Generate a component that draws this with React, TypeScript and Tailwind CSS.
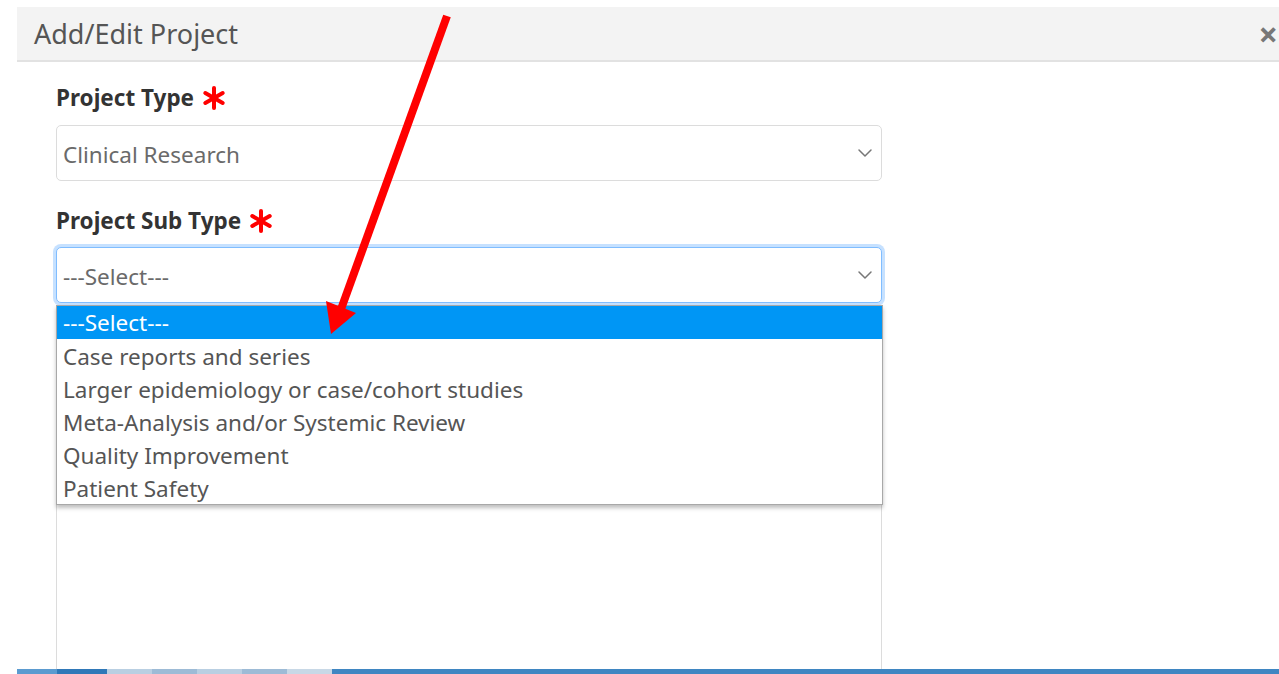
import { ChevronDown } from 'lucide-react'

const SUB_TYPES = [
  '---Select---',
  'Case reports and series',
  'Larger epidemiology or case/cohort studies',
  'Meta-Analysis and/or Systemic Review',
  'Quality Improvement',
  'Patient Safety',
]

/** Heavy red "required" asterisk next to field labels. */
function Required() {
  return (
    <svg viewBox="0 0 24 24" className="ml-[8px] h-[24px] w-[24px]" aria-hidden>
      <g stroke="#f00" strokeWidth="4" strokeLinecap="round">
        <line x1="12" y1="2" x2="12" y2="22" />
        <line x1="3.3" y1="7" x2="20.7" y2="17" />
        <line x1="3.3" y1="17" x2="20.7" y2="7" />
      </g>
    </svg>
  )
}

function FieldLabel({ children }: { children: string }) {
  return (
    <label className="flex h-[28px] items-center text-[22.5px] font-bold leading-[28px] text-[#333]">
      {children}
      <Required />
    </label>
  )
}

function SelectBox({ value, focused }: { value: string; focused?: boolean }) {
  return (
    <div
      className={
        focused
          ? 'flex h-[56px] items-center justify-between rounded-[5px] border border-[#80bdff] bg-white pl-[6px] pr-[4px] shadow-[0_0_0_3px_rgba(128,189,255,0.45)]'
          : 'flex h-[56px] items-center justify-between rounded-[5px] border border-[#dcdcdc] bg-white pl-[6px] pr-[4px]'
      }
    >
      <span className="pt-[4px] text-[22.5px] text-[#6a6a6a]">{value}</span>
      <ChevronDown className="h-[24px] w-[24px] text-[#777]" strokeWidth={1.5} />
    </div>
  )
}

export default function App() {
  return (
    <div className="relative flex h-[674px] w-[1279px] flex-col overflow-hidden bg-white font-['Noto_Sans','Open_Sans',sans-serif]">
      <div className="h-[7px] shrink-0" />

      {/* modal header */}
      <div className="ml-[17px] flex h-[55px] shrink-0 items-center justify-between border-b-2 border-[#e2e2e2] bg-[#f3f3f3] pl-[17px] pr-[1px]">
        <h2 className="pt-[2px] text-[27px] font-normal text-[#555]">Add/Edit Project</h2>
        <span className="text-[34px] font-bold leading-none text-[#777]">×</span>
      </div>

      {/* modal body */}
      <div className="ml-[56px] flex w-[826px] flex-1 flex-col pt-[22px]">
        <FieldLabel>Project Type</FieldLabel>
        <div className="mt-[13px]">
          <SelectBox value="Clinical Research" />
        </div>

        <div className="mt-[26px]">
          <FieldLabel>Project Sub Type</FieldLabel>
        </div>
        <div className="relative z-10 mt-[12px]">
          <SelectBox value="---Select---" focused />
          <ul className="absolute left-0 right-[-1px] top-[58px] border border-[#a8a8a8] bg-white shadow-[0_3px_4px_rgba(0,0,0,0.25)]">
            {SUB_TYPES.map((t, i) => (
              <li
                key={t}
                className={
                  i === 0
                    ? 'h-[33px] bg-[#0096f5] pl-[6px] pt-[1px] text-[22.5px] leading-[32px] text-white'
                    : 'h-[33px] pl-[6px] pt-[1px] text-[22.5px] leading-[33px] text-[#555]'
                }
              >
                {t}
              </li>
            ))}
          </ul>
        </div>

        {/* description textarea, mostly under the open list */}
        <div className="mt-[24px] flex-1 rounded-t-[5px] border border-b-0 border-[#dcdcdc]" />
      </div>

      {/* taskbar edge */}
      <div className="ml-[17px] flex h-[5px] shrink-0 bg-[#3f86c2]">
        <div className="w-[40px] bg-[#5b9bd0]" />
        <div className="w-[50px] bg-[#2f78b8]" />
        <div className="w-[45px] bg-[#b9cfe2]" />
        <div className="w-[45px] bg-[#9dbbd6]" />
        <div className="w-[45px] bg-[#b9cfe2]" />
        <div className="w-[45px] bg-[#9dbbd6]" />
        <div className="w-[45px] bg-[#c8d8e6]" />
      </div>

      {/* red callout arrow */}
      <svg className="pointer-events-none absolute inset-0 z-20" width="1279" height="674" aria-hidden>
        <line x1="447" y1="16" x2="340" y2="312" stroke="#ff0000" strokeWidth="8" />
        <polygon points="326,301 356,313 331,334" fill="#ff0000" />
      </svg>
    </div>
  )
}
